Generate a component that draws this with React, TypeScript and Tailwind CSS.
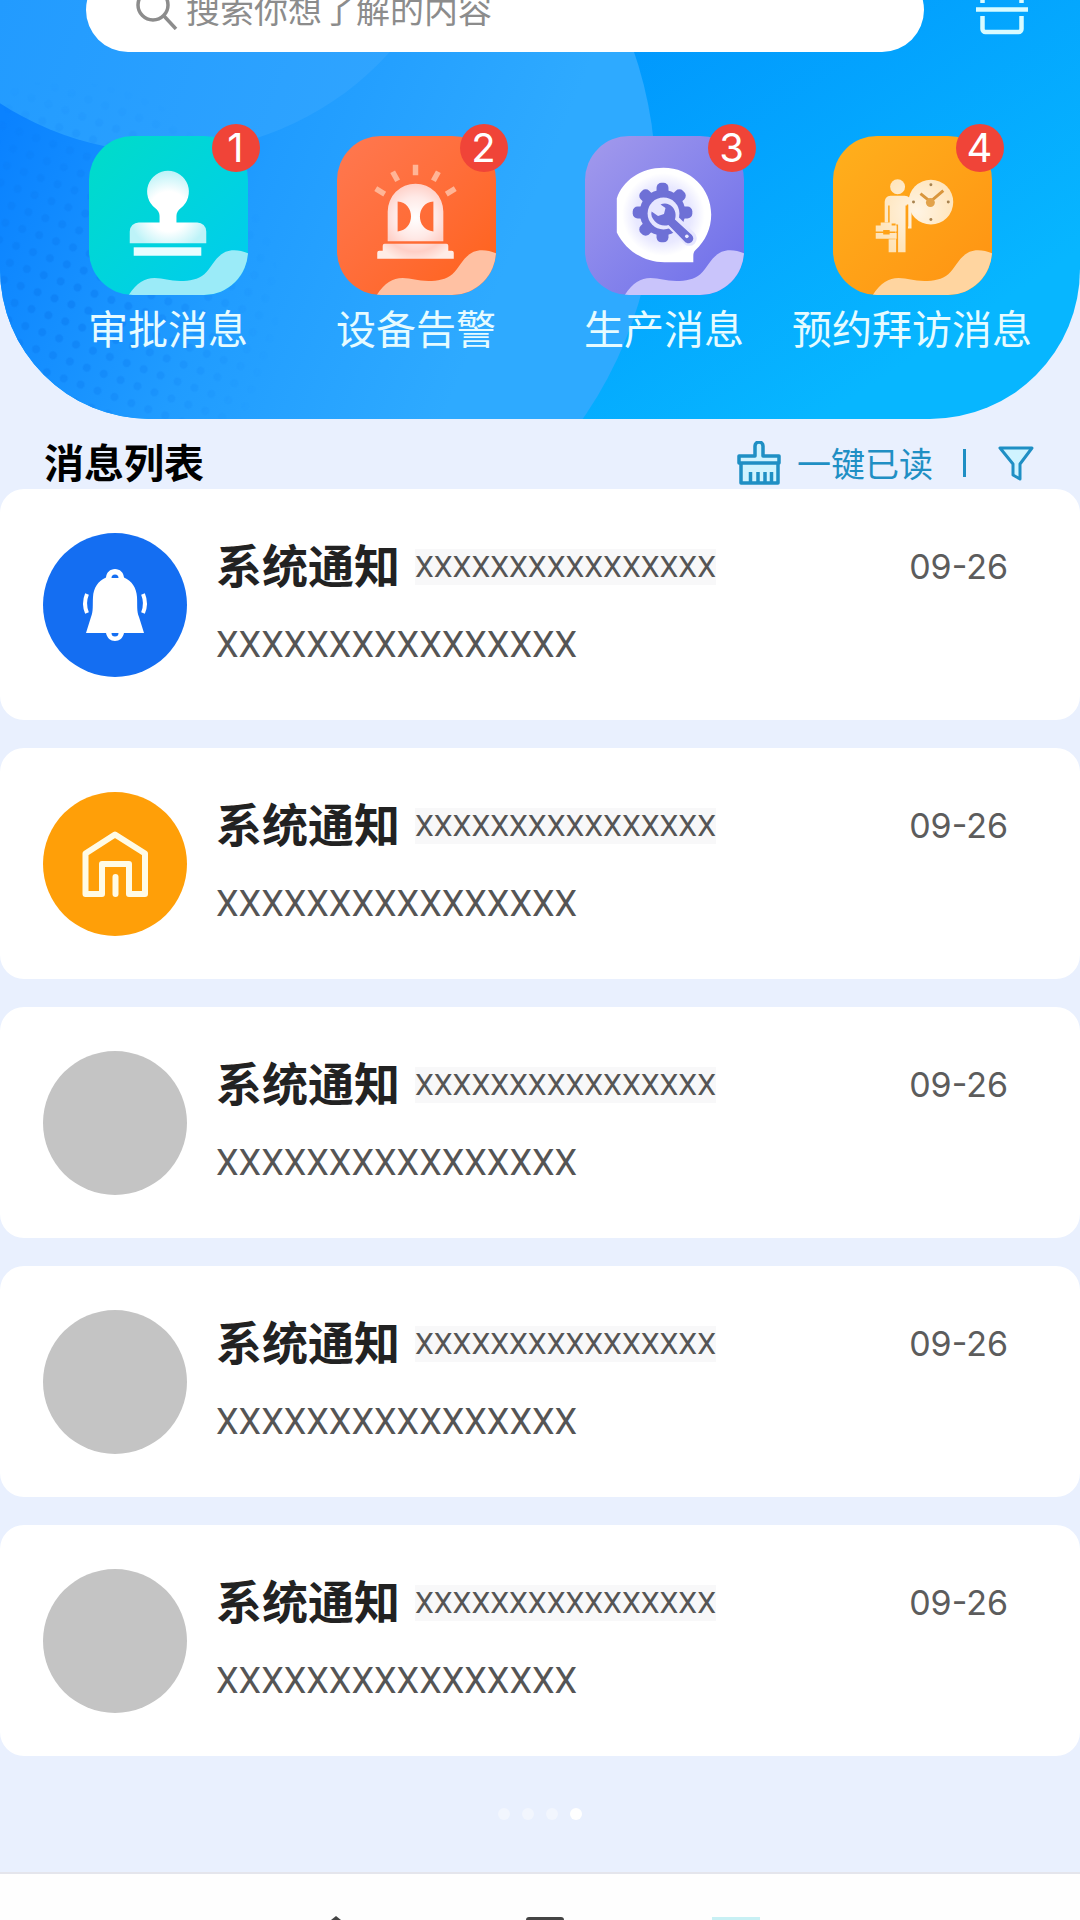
import type { ReactNode } from 'react'

type Category = {
  label: string
  count: number
  tile: string
  wave: string
  icon: ReactNode
}

type Message = {
  id: number
  title: string
  summary: string
  detail: string
  date: string
  color: string
  icon?: ReactNode
}

function StampIcon() {
  return (
    <g>
      <defs>
        <radialGradient id="stamp" gradientUnits="userSpaceOnUse" cx="80" cy="76" r="40">
          <stop offset="0" stopColor="#ffffff" />
          <stop offset="0.5" stopColor="#ffffff" />
          <stop offset="1" stopColor="#bdf3f8" />
        </radialGradient>
      </defs>
      <path
        fill="url(#stamp)"
        d="M79.500 35a21 21 0 0 1 13 37.500c-3 2.500-4.500 5-4.500 8V87h21a9 9 0 0 1 9 9v12H41V96a9 9 0 0 1 9-9h21v-6.500c0-3-1.500-5.500-4.500-8A21 21 0 0 1 79.500 35z"
      />
      <rect x="45" y="112" width="68" height="8.500" fill="#e9fdff" />
    </g>
  )
}

function AlarmIcon() {
  return (
    <g>
      <defs>
        <radialGradient id="alarm" gradientUnits="userSpaceOnUse" cx="79" cy="82" r="46">
          <stop offset="0" stopColor="#ffffff" />
          <stop offset="0.450" stopColor="#ffe9e6" />
          <stop offset="0.750" stopColor="#ffcfc6" />
          <stop offset="1" stopColor="#ffece6" />
        </radialGradient>
      </defs>
      <g stroke="#ffb596" strokeWidth="5.500">
        <path d="M79 29v10.500M56 36l5 9M102 36l-5 9M39 53l9 5.500M119 53l-9 5.500" />
      </g>
      <path
        fill="url(#alarm)"
        fillRule="evenodd"
        d="M51 106V76a28 28 0 0 1 56 0v30zM61 66v30c18-1 18-29 0-30zM97 66v30c-18-1-18-29 0-30z"
      />
      <path fill="url(#alarm)" d="M48 108.500h62a2 2 0 0 1 2 2v5h3.500a2 2 0 0 1 2 2v6h-77v-6a2 2 0 0 1 2-2H46v-5a2 2 0 0 1 2-2z" />
    </g>
  )
}

function ProductionIcon() {
  const teeth = [0, 45, 90, 180, 225, 270, 315]
  return (
    <g>
      <defs>
        <radialGradient id="bubble" gradientUnits="userSpaceOnUse" cx="79" cy="79" r="52">
          <stop offset="0" stopColor="#dcdcff" />
          <stop offset="0.550" stopColor="#e9e9ff" />
          <stop offset="0.800" stopColor="#ffffff" />
        </radialGradient>
      </defs>
      <path
        fill="url(#bubble)"
        d="M32 63C38 45 56 32 79 32c27 0 48 21 48 47 0 14-6 27-16 36-2 2-2 4-2 7v5H80c-21 0-39-12-48-30z"
      />
      <g fill="#6e70d6">
        <circle cx="78" cy="77" r="23" />
        {teeth.map((deg) => (
          <rect key={deg} x="72" y="47" width="12" height="18" rx="5" transform={`rotate(${deg} 78 77)`} />
        ))}
      </g>
      <circle cx="79" cy="78" r="16" fill="#e6e6ff" />
      <path d="M86 84l19 19" stroke="#e6e6ff" strokeWidth="15" strokeLinecap="round" />
      <path
        fill="#6e70d6"
        d="M76 69c4-2 9-1 12 2.500 3 3.500 4 8 2.500 12.500l17 15.500c2 2 2 5 0 7s-5 2-7 0L84 89.500c-5 1.500-10 0-13.500-3.500-3-3-4.500-6.500-3.500-10l6.500 4.500 6-2 1.500-6z"
      />
      <circle cx="102.500" cy="101" r="1.800" fill="#ececff" />
    </g>
  )
}

function VisitorIcon() {
  return (
    <g>
      <defs>
        <radialGradient id="visitor" gradientUnits="userSpaceOnUse" cx="84" cy="76" r="46">
          <stop offset="0" stopColor="#fff4e4" />
          <stop offset="1" stopColor="#ffe2b4" />
        </radialGradient>
      </defs>
      <g fill="url(#visitor)">
        <circle cx="98.500" cy="66.500" r="22.500" />
        <circle cx="65" cy="51" r="7.500" />
        <path d="M58 60h14c4 0 7 3 7 7v26h-3.500V70H73v47h-7.500V89H63.500v28H56v-13h7V88h-6V70h-1.500v17H52V67c0-4 2-7 6-7z" />
        <path d="M48 90v-3h11v3h5v6h-7v-1.500h-6.500V96H43v-6zM43 97.500h7.500V99H57v-1.500h7v6H43z" />
      </g>
      <path d="M75 69v22" stroke="#ff9f14" strokeWidth="1.500" />
      <path d="M88 58l10 8 13-11" fill="none" stroke="#d9963c" strokeWidth="3" />
      <circle cx="98" cy="67" r="4.500" fill="#e2a24a" />
      <g fill="#a88350">
        <circle cx="98.500" cy="49" r="1.500" />
        <circle cx="98.500" cy="84" r="1.500" />
        <circle cx="81" cy="66.500" r="1.500" />
        <circle cx="116" cy="66.500" r="1.500" />
      </g>
    </g>
  )
}

function BellIcon() {
  return (
    <svg viewBox="0 0 72 80" className="h-20 w-18" fill="#fff" aria-hidden="true">
      <path
        fillRule="evenodd"
        d="M36 4c5 0 8.500 3.500 9 8.500C53 16 57.500 23 58 32c.500 8-.5 14 2 20l5 16H45c-1 5-4.500 8-9 8s-8-3-9-8H7l5-16c2.500-6 1.500-12 2-20 .5-9 5-16 13-19.500C27.500 7.500 31 4 36 4zm0 5.500a3.500 3.500 0 0 0-3.500 3.500h7A3.500 3.500 0 0 0 36 9.500zM32.500 68a3.500 3.500 0 0 0 7 0z"
      />
      <path d="M8 29c-2.500 6-2.500 13 0 19M64 29c2.500 6 2.500 13 0 19" fill="none" stroke="#fff" strokeWidth="4" />
    </svg>
  )
}

function HouseIcon() {
  return (
    <svg
      viewBox="0 0 72 72"
      className="size-18"
      fill="none"
      stroke="#fffbe6"
      strokeWidth="6"
      strokeLinejoin="round"
      strokeLinecap="round"
      aria-hidden="true"
    >
      <path d="M6.500 66V25.500L36 6.500l30 19V66H50V36H23v30z" />
      <path d="M36.500 49v17" />
    </svg>
  )
}

const categories: Category[] = [
  { label: '审批消息', count: 1, tile: 'from-[#00dcc8] to-[#00cbf0]', wave: '#9bebf8', icon: <StampIcon /> },
  { label: '设备告警', count: 2, tile: 'from-[#ff7850] to-[#ff6112]', wave: '#ffc1a3', icon: <AlarmIcon /> },
  { label: '生产消息', count: 3, tile: 'from-[#a39aec] to-[#6c6cea]', wave: '#c9c4fb', icon: <ProductionIcon /> },
  { label: '预约拜访消息', count: 4, tile: 'from-[#ffb01c] to-[#ff9212]', wave: '#ffd5a0', icon: <VisitorIcon /> },
]

const messages: Message[] = [
  { id: 1, color: 'bg-[#146ef2]', icon: <BellIcon /> },
  { id: 2, color: 'bg-[#ff9f08]', icon: <HouseIcon /> },
  { id: 3, color: 'bg-[#c4c4c4]' },
  { id: 4, color: 'bg-[#c4c4c4]' },
  { id: 5, color: 'bg-[#c4c4c4]' },
].map((item) => ({
  ...item,
  title: '系统通知',
  summary: 'XXXXXXXXXXXXXXXX',
  detail: 'XXXXXXXXXXXXXXXX',
  date: '09-26',
}))

function HeaderBackdrop() {
  return (
    <svg
      viewBox="0 0 1080 418"
      preserveAspectRatio="none"
      className="absolute inset-0 h-full w-full"
      aria-hidden="true"
    >
      <defs>
        <linearGradient id="sky" x1="0" y1="0" x2="1" y2="0.600">
          <stop offset="0.400" stopColor="#0094fd" />
          <stop offset="1" stopColor="#07b6ff" />
        </linearGradient>
        <linearGradient id="disc" gradientUnits="userSpaceOnUse" x1="0" y1="130" x2="480" y2="330">
          <stop offset="0" stopColor="#0a82ff" />
          <stop offset="0.500" stopColor="#209cff" />
          <stop offset="1" stopColor="#2eaaff" />
        </linearGradient>
        <linearGradient id="glow" gradientUnits="userSpaceOnUse" x1="0" y1="0" x2="360" y2="130">
          <stop offset="0" stopColor="#229bff" />
          <stop offset="1" stopColor="#2fa4ff" />
        </linearGradient>
        <pattern id="dots" width="18" height="18" patternUnits="userSpaceOnUse" patternTransform="rotate(20)">
          <circle cx="9" cy="9" r="4" fill="#0a78ee" />
        </pattern>
        <radialGradient id="fade" gradientUnits="userSpaceOnUse" cx="60" cy="300" r="220">
          <stop offset="0" stopColor="#fff" stopOpacity="0.500" />
          <stop offset="1" stopColor="#fff" stopOpacity="0" />
        </radialGradient>
        <mask id="corner">
          <rect width="400" height="418" fill="url(#fade)" />
        </mask>
      </defs>
      <rect width="1080" height="418" fill="url(#sky)" />
      <circle cx="246" cy="184" r="410" fill="url(#disc)" />
      <circle cx="165" cy="-150" r="302" fill="url(#glow)" />
      <rect width="400" height="418" fill="url(#dots)" mask="url(#corner)" />
    </svg>
  )
}

function CategoryTile({ item }: { item: Category }) {
  return (
    <button type="button" className="flex flex-col items-center gap-1">
      <span className="relative">
        <span className={`block size-[159px] overflow-hidden rounded-[44px] bg-linear-to-br ${item.tile}`}>
          <svg viewBox="0 0 160 160" className="size-full" aria-hidden="true">
            {item.icon}
            <path
              fill={item.wave}
              d="M40 160c8-12 16-17 26-17 9 0 15 3 26 3 9 0 18-2 24-7 9-8 13-24 30-24 5 0 9 1 14 3v42z"
            />
          </svg>
        </span>
        <span className="absolute -top-3 -right-3 flex size-12 items-center justify-center rounded-full bg-[#f04438] font-['Inter',sans-serif] text-[40px] leading-none text-white">
          {item.count}
        </span>
      </span>
      <span className="text-[40px] leading-14 whitespace-nowrap text-[#e6fbff]">{item.label}</span>
    </button>
  )
}

function MessageCard({ message }: { message: Message }) {
  return (
    <li className="flex items-center gap-[29px] rounded-3xl bg-white pt-11 pr-18 pb-[43px] pl-[43px]">
      <span className={`flex size-36 shrink-0 items-center justify-center rounded-full ${message.color}`}>
        {message.icon}
      </span>
      <div className="flex min-w-0 flex-1 flex-col gap-4">
        <div className="flex items-center">
          <h2 className="pb-2 text-[46px] leading-14 font-bold text-[#222]">{message.title}</h2>
          <span className="ml-[15px] bg-[#f8f8f9] font-['Roboto',sans-serif] text-[30px] leading-9 text-[#555]">
            {message.summary}
          </span>
          <time className="ml-auto font-['Inter',sans-serif] text-[34px] leading-10 text-[#5c5c5c]">{message.date}</time>
        </div>
        <p className="font-['Roboto',sans-serif] text-4xl leading-[60px] text-[#555]">{message.detail}</p>
      </div>
    </li>
  )
}

export default function App() {
  return (
    <div className="flex min-h-screen flex-col bg-[#e9f0fe] font-['Noto_Sans_CJK_SC',sans-serif]">
      {/* Header */}
      <header className="relative overflow-hidden rounded-b-[150px] pb-16">
        <HeaderBackdrop />
        <div className="relative -mt-8 flex items-center pr-13 pl-[86px]">
          <label className="flex h-[84px] flex-1 items-center gap-2 rounded-full bg-white pb-1 pl-12">
            <svg viewBox="0 0 44 44" className="size-11" fill="none" stroke="#8c8c8c" strokeWidth="3.500" aria-hidden="true">
              <circle cx="19" cy="19" r="15" />
              <path d="M30 30l12 13" />
            </svg>
            <input
              type="search"
              aria-label="搜索"
              placeholder="搜索你想了解的内容"
              className="min-w-0 flex-1 bg-transparent text-[34px] outline-none placeholder:text-[#8c8c8c]"
            />
          </label>
          <button type="button" aria-label="扫一扫" className="ml-[52px]">
            <svg viewBox="0 0 52 52" className="size-13" fill="none" stroke="#d8fbff" strokeWidth="4.500" aria-hidden="true">
              <path d="M6.500 19V7a3 3 0 0 1 3-3h33a3 3 0 0 1 3 3v12M0 25.500h52M6.500 32v13a3 3 0 0 0 3 3h33a3 3 0 0 0 3-3V32" />
            </svg>
          </button>
        </div>
        <nav className="relative mt-[84px] grid grid-cols-4 px-11">
          {categories.map((item) => (
            <CategoryTile key={item.label} item={item} />
          ))}
        </nav>
      </header>

      {/* List heading */}
      <div className="flex items-center justify-between pt-3.5 pr-[46px] pl-11">
        <h1 className="text-[40px] leading-14 font-bold text-black">消息列表</h1>
        <div className="flex items-center pt-1 text-[#1f8fc4]">
          <button type="button" className="flex items-center gap-4 text-[34px] leading-[52px]">
            <svg
              viewBox="0 0 44 44"
              className="size-11"
              fill="none"
              stroke="currentColor"
              strokeWidth="3.500"
              strokeLinejoin="round"
              aria-hidden="true"
            >
              <path fill="#cff3ff" d="M2 22V15h16V5a4 4 0 0 1 8 0v10h16v7zM4 22v20h37V22" />
              <path d="M13.500 42V31M21 42V31M28 42V31M34.500 42V31" />
            </svg>
            一键已读
          </button>
          <span className="mr-8 ml-[30px] h-7 w-[3px] bg-current" />
          <button type="button" aria-label="筛选">
            <svg
              viewBox="0 0 36 36"
              className="size-9"
              fill="#cff3ff"
              stroke="currentColor"
              strokeWidth="3"
              strokeLinejoin="round"
              aria-hidden="true"
            >
              <path d="M2 3h32L22 19v15l-7-4V19z" />
            </svg>
          </button>
        </div>
      </div>

      {/* Messages */}
      <ul className="flex flex-col gap-7">
        {messages.map((message) => (
          <MessageCard key={message.id} message={message} />
        ))}
      </ul>

      {/* Page dots */}
      <div className="flex flex-1 items-center justify-center gap-3">
        <span className="size-3 rounded-full bg-white/40" />
        <span className="size-3 rounded-full bg-white/40" />
        <span className="size-3 rounded-full bg-white/40" />
        <span className="size-3 rounded-full bg-white" />
      </div>

      {/* Bottom bar */}
      <footer className="flex h-12 items-end justify-center overflow-hidden border-t-2 border-[#e4e5ec] bg-[#fefefe]">
        <svg viewBox="0 0 440 4" className="h-1 w-[440px]" aria-hidden="true">
          <path fill="#444" d="M11 4l5-4 5 4zM206 4c0-2 1-3 3-3h32c2 0 3 1 3 3z" />
          <rect x="392" y="1" width="48" height="3" fill="#c8f0f4" />
        </svg>
      </footer>
    </div>
  )
}
